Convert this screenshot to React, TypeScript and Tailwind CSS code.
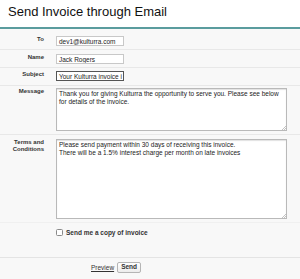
import React from 'react'

const font = { fontFamily: '"Liberation Sans", Arial, sans-serif' }

function Label({ children }: { children: React.ReactNode }) {
  return (
    <div className="w-[44px] shrink-0 text-right text-[6px] font-bold leading-[7px] text-[#333]">
      {children}
    </div>
  )
}

function TextInput({ value, focused = false }: { value: string; focused?: boolean }) {
  return (
    <div
      className={`w-[68px] h-[10px] overflow-hidden whitespace-nowrap bg-white px-[2px] text-[6.5px] leading-[9px] text-[#222] border ${
        focused ? 'border-[#555]' : 'border-[#c8c8c8]'
      }`}
    >
      {value}
    </div>
  )
}

function Area({ lines, height }: { lines: string[]; height: string }) {
  return (
    <div className="relative">
      <textarea
        readOnly
        className={`block w-[231px] ${height} resize-none bg-white border border-[#b9b9b9] shadow-[inset_0_1px_1px_rgba(0,0,0,0.12)] px-[2px] py-[1px] text-[6.5px] leading-[8px] text-[#222] outline-none`}
        defaultValue={lines.join('\n')}
      />
      {/* resize grip */}
      <svg className="absolute right-[1px] bottom-[1px]" width="5" height="5" viewBox="0 0 5 5">
        <path d="M5 1 L1 5 M5 3 L3 5" stroke="#aaa" strokeWidth="0.7" />
      </svg>
    </div>
  )
}

export default function App() {
  return (
    <div className="w-[300px] h-[279px] overflow-hidden bg-[#f8f8f8]" style={font}>
      <div className="h-[29px] bg-white border-b-2 border-[#5a9c9e] flex items-center px-[8px]">
        <h1 className="text-[13px] leading-none text-[#111] -mt-[4px]">Send Invoice through Email</h1>
      </div>

      <div className="flex items-start gap-[12px] pt-[7px] pb-[3px] border-b border-[#e8e8e8]">
        <Label>To</Label>
        <TextInput value="dev1@kulturra.com" />
      </div>
      <div className="flex items-start gap-[12px] pt-[4px] pb-[3px] border-b border-[#e8e8e8]">
        <Label>Name</Label>
        <TextInput value="Jack Rogers" />
      </div>
      <div className="flex items-start gap-[12px] pt-[3px] pb-[4px] border-b border-[#e8e8e8]">
        <Label>Subject</Label>
        <TextInput value="Your Kulturra invoice i" focused />
      </div>
      <div className="flex items-start gap-[12px] pt-[2px] pb-[3px] border-b border-[#e8e8e8]">
        <Label>Message</Label>
        <Area
          height="h-[43px]"
          lines={[
            'Thank you for giving Kulturra the opportunity to serve you. Please see below for details of the invoice.',
          ]}
        />
      </div>
      <div className="flex items-start gap-[12px] pt-[4px] pb-[3px] border-b border-[#f0f0f0]">
        <Label>
          Terms and
          <br />
          Conditions
        </Label>
        <Area
          height="h-[80px]"
          lines={[
            'Please send payment within 30 days of receiving this invoice.',
            'There will be a 1.5% interest charge per month on late invoices',
          ]}
        />
      </div>
      <div className="h-[35px] flex items-start gap-[12px] pt-[5px] border-b border-[#e4e4e4]">
        <div className="w-[44px] shrink-0" />
        <label className="flex items-center gap-[3px] text-[6.5px] font-bold text-[#333]">
          <span className="w-[7px] h-[7px] rounded-[1.5px] border border-[#8a8a8a] bg-white" />
          Send me a copy of invoice
        </label>
      </div>
      <div className="flex items-center pl-[91px] gap-[3px] pt-[4px]">
        <a className="text-[6.5px] underline text-[#333]">Preview</a>
        <button className="h-[11px] px-[3px] rounded-[2px] border border-[#b5b5b5] bg-gradient-to-b from-white to-[#ececec] text-[6.5px] font-bold text-[#333] leading-none">
          Send
        </button>
      </div>
    </div>
  )
}
